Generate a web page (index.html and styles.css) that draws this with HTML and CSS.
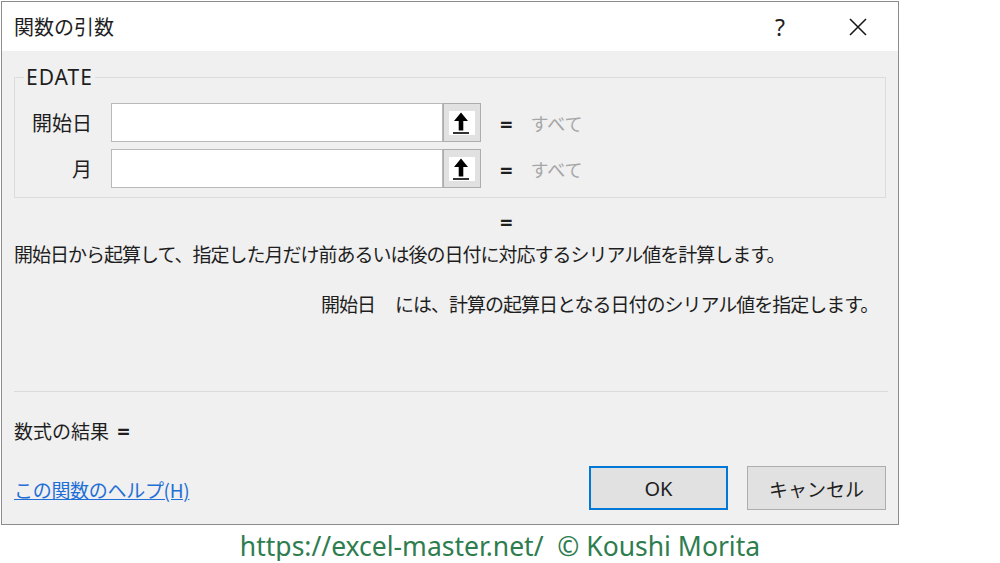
FILE: index.html
```html
<!DOCTYPE html>
<html lang="ja">
<head>
  <meta charset="UTF-8">
  <title>関数の引数</title>
  <link rel="stylesheet" href="styles.css">
</head>
<body>
  <div class="dialog">
    <div class="titlebar">
      <span class="title">関数の引数</span>
      <span class="help">?</span>
      <svg class="close" width="18" height="18" viewBox="0 0 18 18">
        <path d="M1 1 L17 17 M17 1 L1 17" stroke="#1a1a1a" stroke-width="1.6" fill="none"/>
      </svg>
    </div>

    <div class="content">
      <fieldset class="args">
        <legend>EDATE</legend>

        <div class="arg-row">
          <label class="arg-label">開始日</label>
          <div class="arg-input"></div>
          <div class="ref-btn">
            <svg width="26" height="24" viewBox="0 0 26 24">
              <rect width="26" height="24" fill="#fff"/>
              <polygon points="12,1.5 19,10 14.3,10 14.3,19.5 9.7,19.5 9.7,10 5,10" fill="#000"/>
              <rect x="4" y="21.2" width="16" height="1.6" fill="#000"/>
            </svg>
          </div>
          <span class="eq">=</span>
          <span class="arg-value">すべて</span>
        </div>

        <div class="arg-row">
          <label class="arg-label">月</label>
          <div class="arg-input"></div>
          <div class="ref-btn">
            <svg width="26" height="24" viewBox="0 0 26 24">
              <rect width="26" height="24" fill="#fff"/>
              <polygon points="12,1.5 19,10 14.3,10 14.3,19.5 9.7,19.5 9.7,10 5,10" fill="#000"/>
              <rect x="4" y="21.2" width="16" height="1.6" fill="#000"/>
            </svg>
          </div>
          <span class="eq">=</span>
          <span class="arg-value">すべて</span>
        </div>
      </fieldset>

      <div class="func-result"><span class="eq">=</span></div>

      <p class="func-desc">開始日から起算して、指定した月だけ前あるいは後の日付に対応するシリアル値を計算します。</p>

      <p class="arg-desc"><span class="arg-name">開始日</span>には、計算の起算日となる日付のシリアル値を指定します。</p>

      <div class="separator"></div>

      <div class="formula-result">数式の結果 <span class="eq">=</span></div>

      <div class="footer-row">
        <a class="help-link" href="#">この関数のヘルプ(H)</a>
        <div class="buttons">
          <button class="btn btn-default">OK</button>
          <button class="btn">キャンセル</button>
        </div>
      </div>
    </div>
  </div>

  <div class="credit">https://excel-master.net/&nbsp; © Koushi Morita</div>
</body>
</html>
```

FILE: styles.css
```css
body {
  margin: 0;
  background: #fff;
  font-family: "Noto Sans CJK JP", "Noto Sans", sans-serif;
  color: #1e1e1e;
}

.dialog {
  margin: 1px 0 0 1px;
  width: 896px;
  height: 522px;
  border: 1px solid #8c8c8c;
  background: #f0f0f0;
  display: flex;
  flex-direction: column;
}

.titlebar {
  height: 49px;
  background: #fff;
  display: flex;
  align-items: center;
  padding-left: 12px;
}

.title {
  font-size: 20px;
  line-height: 24px;
  flex: 1;
}

.help {
  font-family: "Noto Sans", sans-serif;
  font-size: 23px;
  line-height: 24px;
  margin-right: 64px;
}

.close {
  margin-right: 31px;
}

.content {
  padding: 0 12px 0 12px;
}

.args {
  margin: 16px 0 0 0;
  padding: 16px 0 9px 0;
  border: 1px solid #dcdcdc;
  display: flex;
  flex-direction: column;
  gap: 7px;
}

.args legend {
  margin-left: 9px;
  padding: 0 2px;
  font-family: "Noto Sans", sans-serif;
  font-size: 21px;
  line-height: 20px;
  letter-spacing: 1px;
}

.arg-row {
  display: flex;
  align-items: center;
  height: 39px;
}

.arg-label {
  width: 77px;
  margin-right: 19px;
  text-align: right;
  font-size: 20px;
  line-height: 24px;
}

.arg-input {
  width: 330px;
  height: 37px;
  background: #fff;
  border: 1px solid #b9b9b9;
}

.ref-btn {
  width: 36px;
  height: 37px;
  border: 1px solid #adadad;
  background: #e1e1e1;
  display: flex;
  align-items: center;
  justify-content: center;
}

.ref-btn svg {
  display: block;
}

.eq {
  font-family: "Noto Sans", sans-serif;
  font-weight: bold;
  font-size: 22px;
  line-height: 24px;
}

.arg-row .eq {
  margin-left: 19px;
}

.arg-value {
  margin-left: 18px;
  color: #a6a6a6;
  font-size: 18px;
  line-height: 24px;
}

.func-result {
  margin: 10px 0 0 486px;
  height: 24px;
  font-size: 22px;
  line-height: 24px;
}

.func-desc,
.arg-desc {
  margin: 10px 0 0 0;
  height: 24px;
  font-size: 19px;
  line-height: 24px;
  letter-spacing: -1px;
  white-space: nowrap;
}

.arg-desc {
  margin: 26px 0 0 307px;
}

.arg-name {
  margin-right: 20px;
}

.separator {
  margin: 75px -2px 0 0;
  height: 1px;
  background: #dadada;
}

.formula-result {
  margin-top: 26px;
  height: 24px;
  font-size: 19px;
  line-height: 24px;
}

.formula-result .eq {
  margin-left: 4px;
}

.footer-row {
  margin-top: 24px;
  display: flex;
  align-items: center;
}

.help-link {
  color: #1f6fd6;
  font-size: 19px;
  line-height: 24px;
  letter-spacing: -0.3px;
  margin-top: 4px;
}

.buttons {
  margin-left: auto;
  display: flex;
  gap: 19px;
}

.btn {
  width: 139px;
  height: 44px;
  border: 1px solid #adadad;
  background: #e1e1e1;
  font-family: "Noto Sans CJK JP", "Noto Sans", sans-serif;
  font-size: 19px;
  color: #1e1e1e;
  padding: 0;
}

.btn-default {
  border: 2px solid #0078d7;
  font-family: "Noto Sans", sans-serif;
  font-size: 20px;
}

.credit {
  margin-top: 6px;
  text-align: center;
  font-family: "Noto Sans", sans-serif;
  font-size: 26.5px;
  line-height: 30px;
  color: #2e7d4f;
}
```
